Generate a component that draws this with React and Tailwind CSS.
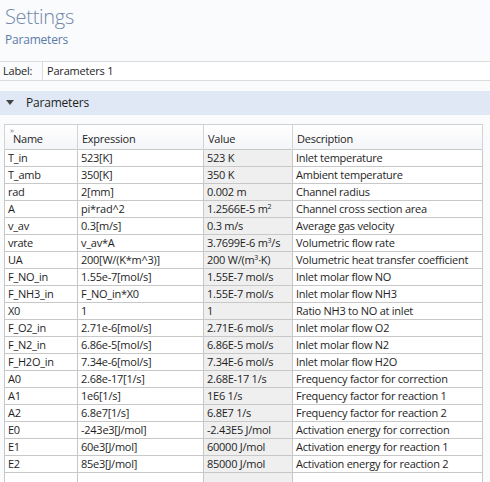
import React from 'react';

const rows = [
    ['T_in', '523[K]', '523 K', 'Inlet temperature'],
    ['T_amb', '350[K]', '350 K', 'Ambient temperature'],
    ['rad', '2[mm]', '0.002 m', 'Channel radius'],
    ['A', 'pi*rad^2', <>1.2566E-5 m<sup className="text-[7px]">2</sup></>, 'Channel cross section area'],
    ['v_av', '0.3[m/s]', '0.3 m/s', 'Average gas velocity'],
    ['vrate', 'v_av*A', <>3.7699E-6 m<sup className="text-[7px]">3</sup>/s</>, 'Volumetric flow rate'],
    ['UA', '200[W/(K*m^3)]', <>200 W/(m<sup className="text-[7px]">3</sup>·K)</>, 'Volumetric heat transfer coefficient'],
    ['F_NO_in', '1.55e-7[mol/s]', '1.55E-7 mol/s', 'Inlet molar flow NO'],
    ['F_NH3_in', 'F_NO_in*X0', '1.55E-7 mol/s', 'Inlet molar flow NH3'],
    ['X0', '1', '1', 'Ratio NH3 to NO at inlet'],
    ['F_O2_in', '2.71e-6[mol/s]', '2.71E-6 mol/s', 'Inlet molar flow O2'],
    ['F_N2_in', '6.86e-5[mol/s]', '6.86E-5 mol/s', 'Inlet molar flow N2'],
    ['F_H2O_in', '7.34e-6[mol/s]', '7.34E-6 mol/s', 'Inlet molar flow H2O'],
    ['A0', '2.68e-17[1/s]', '2.68E-17 1/s', 'Frequency factor for correction'],
    ['A1', '1e6[1/s]', '1E6 1/s', 'Frequency factor for reaction 1'],
    ['A2', '6.8e7[1/s]', '6.8E7 1/s', 'Frequency factor for reaction 2'],
    ['E0', '-243e3[J/mol]', '-2.43E5 J/mol', 'Activation energy for correction'],
    ['E1', '60e3[J/mol]', '60000 J/mol', 'Activation energy for reaction 1'],
    ['E2', '85e3[J/mol]', '85000 J/mol', 'Activation energy  for reaction 2'],
    ['', '', '', ''],
];

const App = () => {
    return (
        <div className="w-[490px] h-[482px] overflow-hidden bg-[#f9fbfd] text-[#1e1e1e]" style={{ fontFamily: '"Open Sans", "Noto Sans", sans-serif' }}>
            {/* Title */}
            <div className="h-[61px] pl-[5px] pt-[4px]">
                <div className="text-[20px] font-light leading-[26px] tracking-[-0.3px] text-[#7388a8]">Settings</div>
                <div className="text-[12px] leading-[18px] tracking-[-0.2px] text-[#5b7aa8] mt-[1px]">Parameters</div>
            </div>

            {/* Label row */}
            <div className="h-[20px] flex items-center border-y border-[#dcdcdc] bg-[#f9fbfd] tracking-[-0.2px]">
                <span className="text-[11px] pl-[3px] w-[42px]">Label:</span>
                <div className="flex-1 h-full bg-white border-l border-[#dcdcdc] text-[11px] pl-[4px] flex items-center">Parameters 1</div>
            </div>

            {/* Section header */}
            <div className="mt-[10px] h-[24px] bg-[#dfe8f4] flex items-center pl-[6px] text-[12px] tracking-[-0.2px]">
                <svg width="8" height="6" viewBox="0 0 8 6" className="mr-[12px]">
                    <path d="M0 0 L8 0 L4 5 Z" fill="#444" />
                </svg>
                Parameters
            </div>

            {/* Table */}
            <div className="mt-[9px] ml-[4px] w-[479px] border-t border-[#d0d0d0]">
                <table className="w-full border-collapse text-[11px] tracking-[-0.25px] table-fixed">
                    <colgroup>
                        <col className="w-[73px]" />
                        <col className="w-[126px]" />
                        <col className="w-[89px]" />
                        <col />
                    </colgroup>
                    <thead>
                        <tr className="h-[24px] bg-gradient-to-b from-white to-[#f3f5f8]">
                            <th className="relative border-x border-[#d4d4d4] font-normal text-left pl-[4px] pt-[5px]">
                                <span className="absolute left-[5px] top-[1px] text-[8px] text-[#777] leading-none">»</span>
                                <span className="pl-[4px]">Name</span>
                            </th>
                            <th className="border-r border-[#d4d4d4] font-normal text-left pl-[4px] pt-[5px]">Expression</th>
                            <th className="border-r border-[#d4d4d4] font-normal text-left pl-[4px] pt-[5px]">Value</th>
                            <th className="border-r border-[#d4d4d4] font-normal text-left pl-[4px] pt-[5px]">Description</th>
                        </tr>
                    </thead>
                    <tbody className="bg-white">
                        {rows.map((r, i) => (
                            <tr key={i} className="h-[17px] leading-[16px]">
                                <td className="border border-[#c8c8c8] pl-[3px] whitespace-nowrap overflow-hidden">{r[0]}</td>
                                <td className="border border-[#c8c8c8] pl-[3px] whitespace-nowrap overflow-hidden">{r[1]}</td>
                                <td className="border border-[#c8c8c8] pl-[3px] whitespace-nowrap overflow-hidden bg-[#efefef]">{r[2]}</td>
                                <td className="border border-[#c8c8c8] pl-[3px] whitespace-nowrap overflow-hidden">{r[3]}</td>
                            </tr>
                        ))}
                    </tbody>
                </table>
            </div>
        </div>
    );
};

export default App;
